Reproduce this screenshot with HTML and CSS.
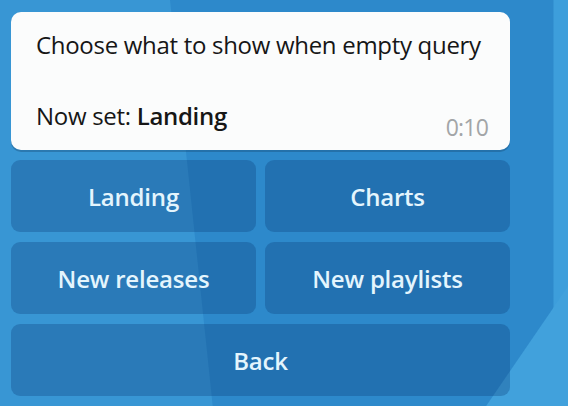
FILE: index.html
```html
<!DOCTYPE html>
<html>
<head>
<meta charset="utf-8">
<link rel="stylesheet" href="styles.css">
</head>
<body>
<div class="chat">
  <div class="bubble">
    <p class="line">Choose what to show when empty query</p>
    <p class="line blank">&nbsp;</p>
    <div class="last">
      <p class="line">Now set: <b>Landing</b></p>
      <span class="time">0:10</span>
    </div>
  </div>
  <div class="keyboard">
    <div class="key">Landing</div>
    <div class="key">Charts</div>
    <div class="key">New releases</div>
    <div class="key">New playlists</div>
    <div class="key wide">Back</div>
  </div>
</div>
</body>
</html>
```
FILE: styles.css
```css
html, body {
  margin: 0;
  width: 568px;
  height: 406px;
  overflow: hidden;
}
body {
  font-family: "Open Sans", "DejaVu Sans", sans-serif;
  background:
    linear-gradient(124.4deg, transparent 0 630px, #41a1dc 631px 100%),
    linear-gradient(84deg, #3896d4 0 211px, transparent 212px 100%),
    linear-gradient(90deg, #2d89cb 0 553px, #3d9edb 554px 100%);
}
.chat {
  padding: 12px 58px 0 11px;
}
.bubble {
  background: #fbfcfc;
  border-radius: 10px;
  height: 138px;
  box-sizing: border-box;
  padding: 15px 22px 0 25px;
  box-shadow: 0 2px 0 rgba(20, 70, 110, 0.35);
  color: #161616;
}
.line {
  margin: 0;
  font-size: 24px;
  line-height: 35.5px;
  letter-spacing: -0.3px;
}
.line b {
  font-weight: 600;
}
.last {
  display: flex;
  justify-content: space-between;
  align-items: flex-end;
}
.time {
  font-size: 23px;
  color: #a2a5a7;
  font-weight: 400;
  letter-spacing: -0.8px;
  line-height: 30px;
  margin-bottom: -8px;
}
.keyboard {
  margin-top: 10px;
  display: grid;
  grid-template-columns: 1fr 1fr;
  gap: 10px 9px;
}
.key {
  height: 72px;
  border-radius: 9px;
  background: rgba(10, 60, 120, 0.3);
  color: #e4f5fd;
  font-weight: 600;
  font-size: 24px;
  display: flex;
  align-items: center;
  justify-content: center;
  letter-spacing: -0.2px;
}
.key.wide {
  grid-column: 1 / 3;
}
```
